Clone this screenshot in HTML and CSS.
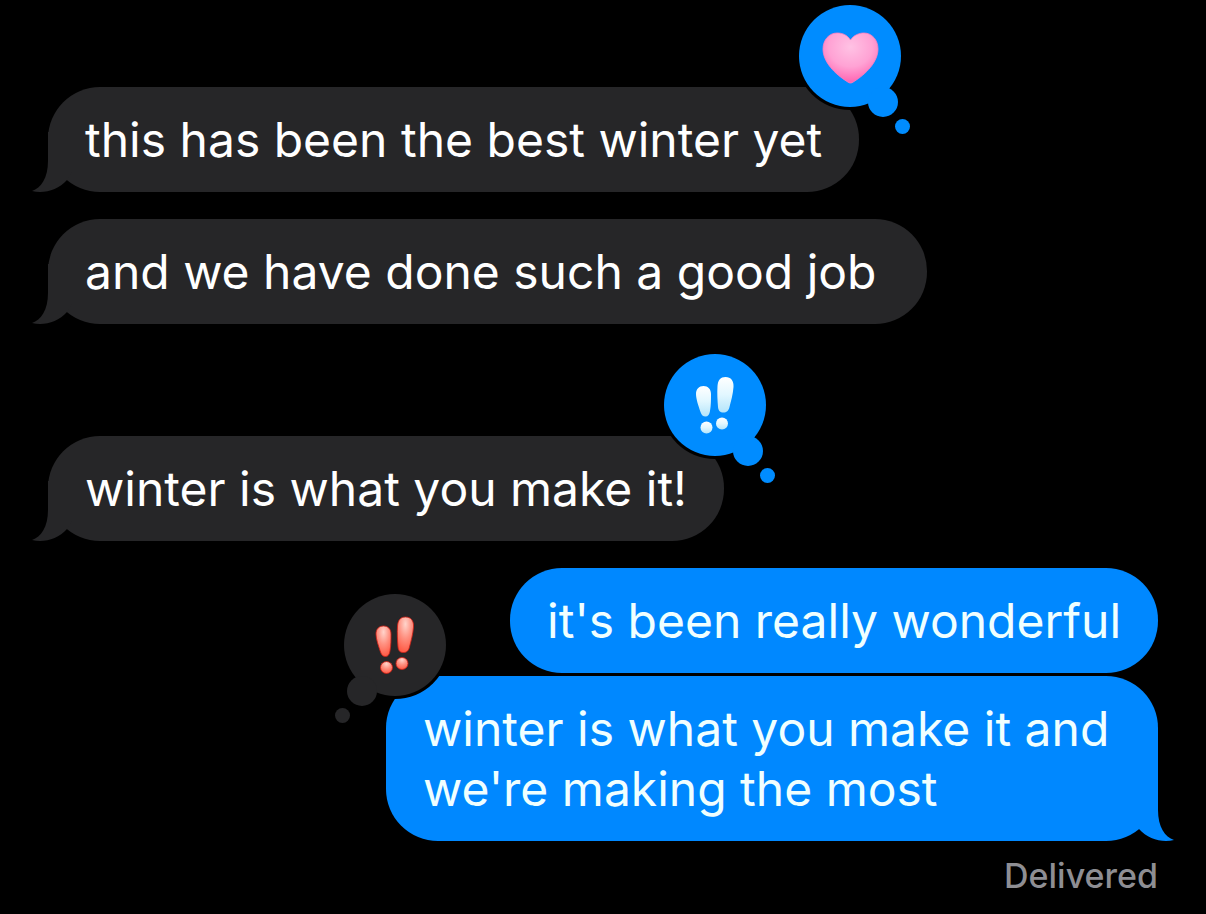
FILE: index.html
```html
<!DOCTYPE html>
<html lang="en">
<head>
<meta charset="utf-8">
<meta name="viewport" content="width=device-width, initial-scale=1">
<title>Messages</title>
<link rel="stylesheet" href="styles.css">
</head>
<body>
<svg class="defs" aria-hidden="true">
  <defs>
    <radialGradient id="pink" cx="50%" cy="28%" r="72%">
      <stop offset="0" stop-color="#ffc2e4"/><stop offset=".55" stop-color="#ffa2d4"/><stop offset="1" stop-color="#ff62b0"/>
    </radialGradient>
    <linearGradient id="ice" x1="0" y1="0" x2="0" y2="1">
      <stop offset="0" stop-color="#ffffff"/><stop offset=".5" stop-color="#e2f7ff"/><stop offset="1" stop-color="#b4e5fb"/>
    </linearGradient>
    <radialGradient id="red" cx="50%" cy="20%" r="80%">
      <stop offset="0" stop-color="#ffd4cb"/><stop offset=".5" stop-color="#ff9181"/><stop offset="1" stop-color="#ff5a45"/>
    </radialGradient>
    <g id="marks">
      <path d="M42.500 35C47 35 50 38 50 43C50 49 50 54 49 60C48.500 63.500 47 65.500 44.500 65.500C42 65.500 40.500 64 39.500 61C37.500 55 35 48 35 43C35 38 38 35 42.500 35Z"/>
      <path d="M64.500 26C70 26 73 30 72.500 36C72 43 70 50 68.500 56C67.500 60 65.500 61.500 62.500 61.500C59 61.500 57.500 60 57 56C56.500 50 56 42 56.500 35C57 29 59.500 26 64.500 26Z"/>
      <circle cx="45.500" cy="76.500" r="6"/>
      <circle cx="61" cy="72.500" r="6"/>
    </g>
    <symbol id="tail" viewBox="0 0 40 60">
      <path d="M16 0V29C16 46 9 56 0 59C12 62 26 58 35 48L40 40V0Z"/>
    </symbol>
  </defs>
</svg>
<main class="thread">
  <div class="message received tapped">
    <p class="bubble">this has been the best winter yet</p>
    <svg class="tail" aria-hidden="true"><use href="#tail"/></svg>
    <svg class="reaction" viewBox="0 0 117 134" role="img" aria-label="Heart">
      <circle class="ring" cx="54" cy="54" r="54"/>
      <g class="cloud"><circle cx="54" cy="54" r="51"/><circle cx="87" cy="100" r="15"/><circle cx="106.500" cy="124.500" r="7.500"/></g>
      <path fill="url(#pink)" stroke="#ff7fc0" stroke-width=".8" d="M54.500 38C58 33 63 31 68 31C76 31 82 38 82 47C82 60 70 72 58 79.500C55 81.500 54 81.500 51 79.500C39 72 27 60 27 47C27 38 33 31 41 31C47 31 51 33 54.500 38Z"/>
    </svg>
  </div>
  <div class="message received">
    <p class="bubble">and we have done such a good job&nbsp;</p>
    <svg class="tail" aria-hidden="true"><use href="#tail"/></svg>
  </div>
  <div class="message received tapped">
    <p class="bubble">winter is what you make it!</p>
    <svg class="tail" aria-hidden="true"><use href="#tail"/></svg>
    <svg class="reaction" viewBox="0 0 117 134" role="img" aria-label="Emphasized">
      <circle class="ring" cx="54" cy="54" r="54"/>
      <g class="cloud"><circle cx="54" cy="54" r="51"/><circle cx="87" cy="100" r="15"/><circle cx="106.500" cy="124.500" r="7.500"/></g>
      <use href="#marks" fill="url(#ice)"/>
    </svg>
  </div>
  <div class="message sent">
    <p class="bubble">it's been really wonderful</p>
  </div>
  <div class="message sent joined">
    <p class="bubble">winter is what you make it and we're making the most</p>
    <svg class="tail" aria-hidden="true"><use href="#tail"/></svg>
    <svg class="reaction" viewBox="0 0 117 134" role="img" aria-label="Emphasized">
      <circle class="ring" cx="63" cy="54" r="54"/>
      <g class="cloud"><circle cx="63" cy="54" r="51"/><circle cx="30" cy="100" r="15"/><circle cx="10.500" cy="124.500" r="7.500"/></g>
      <use href="#marks" x="9" fill="url(#red)" stroke="#d02015" stroke-width=".8"/>
    </svg>
  </div>
  <p class="status">Delivered</p>
</main>
</body>
</html>
```
FILE: styles.css
```css
* { box-sizing: border-box; }
body {
  margin: 0;
  background: #000;
  font-family: Inter, "Liberation Sans", sans-serif;
}
.defs { position: absolute; width: 0; height: 0; }
.thread {
  display: flex;
  flex-direction: column;
  padding: 0 48px 16px;
}
.message {
  --fill: #262628;
  position: relative;
  max-width: 772px;
  margin-top: 27px;
}
.received { align-self: flex-start; max-width: 100%; }
.sent { --fill: #0088ff; align-self: flex-end; }
.joined { margin-top: 3px; }
.tapped { margin-top: 112px; }
.tapped:first-child { margin-top: 87px; }
.bubble {
  margin: 0;
  padding: 23px 37px 22px;
  border-radius: 52px;
  background: var(--fill);
  color: #fff;
  font-size: 48px;
  line-height: 60px;
}
.sent .bubble { color: #f0ffff; }
.tail {
  position: absolute;
  bottom: 0;
  left: -16px;
  width: 40px;
  height: 60px;
  fill: var(--fill);
}
.sent .tail { left: auto; right: -16px; transform: scaleX(-1); }
.reaction {
  position: absolute;
  top: -85px;
  right: -54px;
  width: 117px;
  height: 134px;
}
.sent .reaction { right: auto; left: -54px; }
.ring { fill: #000; }
.received .cloud { fill: #008cff; }
.sent .cloud { fill: #262628; }
.status {
  align-self: flex-end;
  margin: 15px 0 0;
  color: #8e8e93;
  font-size: 34px;
  font-weight: 500;
  line-height: 40px;
}
```
